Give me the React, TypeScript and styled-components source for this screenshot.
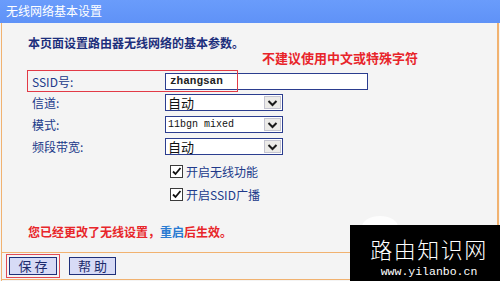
import React from 'react'
import styled, { createGlobalStyle } from 'styled-components'

const GlobalStyle = createGlobalStyle`
  html, body {
    margin: 0;
    padding: 0;
    background: #f4f4f4;
  }
  body {
    font-family: "Noto Sans CJK SC", "Liberation Sans", sans-serif;
  }
`

const Page = styled.div`
  position: relative;
  width: 500px;
  height: 281px;
  overflow: hidden;
  background: #f4f4f4;
`

const TitleBar = styled.div`
  height: 23px;
  line-height: 22px;
  padding-left: 6px;
  background: linear-gradient(#6a9cfb, #5f92f7);
  color: #ffffff;
  font-size: 12px;
`

const Panel = styled.div`
  display: flex;
  flex-direction: column;
  height: 258px;
  margin: 0 1px 0 1px;
  border-left: 1px solid #f1b270;
  border-right: 2px solid #f1b270;
  box-sizing: border-box;
`

const Content = styled.div`
  padding: 12px 0 0 26px;
`

const Intro = styled.div`
  height: 15px;
  line-height: 16px;
  font-size: 12px;
  font-weight: 700;
  color: #1d2f7c;
`

const Hint = styled.div`
  margin-left: 234px;
  height: 18px;
  line-height: 16px;
  font-size: 13px;
  font-weight: 700;
  color: #e8242a;
`

const FieldRow = styled.div<{ $height?: number }>`
  position: relative;
  display: flex;
  align-items: ${({ $height }) => ($height === 22 ? 'flex-start' : 'center')};
  height: ${({ $height }) => $height ?? 22}px;
  padding-left: 4px;
`

const SsidRow = styled(FieldRow)`
  align-items: center;
  margin-top: 2px;
  margin-bottom: 2px;
`

const Label = styled.div`
  width: 133px;
  flex: none;
  font-size: 12px;
  color: #20398a;
  line-height: 17px;
`

const Annotation = styled.div`
  position: absolute;
  left: -1px;
  top: 0;
  width: 209px;
  height: 20px;
  border: 1px solid #e23a46;
  pointer-events: none;
`

const TextInput = styled.div`
  width: 203px;
  height: 17px;
  box-sizing: border-box;
  border: 1px solid #2b3d8f;
  background: #ffffff;
  padding-left: 4px;
  font-family: "Liberation Mono", monospace;
  font-size: 11px;
  font-weight: 700;
  line-height: 15px;
  color: #222;
`

const Select = styled.div`
  display: flex;
  width: 118px;
  height: 17px;
  box-sizing: border-box;
  border: 1px solid #2b3d8f;
  background: #ffffff;
`

const SelectValue = styled.div<{ $mono?: boolean }>`
  flex: 1;
  padding-left: 2px;
  font-family: ${({ $mono }) =>
    $mono ? '"Liberation Mono", monospace' : '"Noto Sans CJK SC", sans-serif'};
  font-size: ${({ $mono }) => ($mono ? 10 : 13)}px;
  line-height: 15px;
  color: #111;
`

const SelectArrow = styled.div`
  display: flex;
  align-items: center;
  justify-content: center;
  width: 17px;
  margin: 1px;
  background: #ecebe8;
  border: 1px solid #c4c4d0;
  box-sizing: border-box;
`

const CheckRow = styled(FieldRow)`
  padding-left: 142px;
  height: 23px;
`

const CheckBox = styled.span`
  display: inline-flex;
  align-items: center;
  justify-content: center;
  width: 11px;
  height: 11px;
  margin-right: 3px;
  border: 1px solid #3a3a3a;
  background: #ffffff;
`

const CheckLabel = styled.span`
  font-size: 12px;
  color: #20398a;
`

const Message = styled.div`
  margin-top: 18px;
  line-height: 16px;
  font-size: 12px;
  font-weight: 700;
  color: #e8262a;
`

const Link = styled.span`
  color: #2a7bd2;
`

const Footer = styled.div`
  display: flex;
  align-items: center;
  gap: 9px;
  margin-top: auto;
  margin-bottom: 1px;
  height: 28px;
  box-sizing: border-box;
  margin-left: -1px;
  margin-right: -2px;
  padding-left: 5px;
  border-top: 1px solid #f1b270;
  border-bottom: 1px solid #f1b270;
`

const Focus = styled.div`
  padding: 2px;
  border: 1px solid #e04a56;
`

const Button = styled.div<{ $width: number }>`
  width: ${({ $width }) => $width}px;
  height: 18px;
  box-sizing: border-box;
  border: 1px solid #1e2f7a;
  background: #d7dbf6;
  color: #1c2a6c;
  font-size: 13px;
  line-height: 16px;
  text-align: center;
`

const Watermark = styled.div`
  position: absolute;
  right: 0;
  bottom: 0;
  width: 150px;
  height: 56px;
  background: #000000;
  color: #ffffff;
  display: flex;
  flex-direction: column;
  align-items: center;
`

const WatermarkGhost = styled.div`
  position: absolute;
  left: 362px;
  top: 216px;
  width: 36px;
  height: 22px;
  border-radius: 50%;
  background: rgba(255, 255, 255, 0.8);
`

const WatermarkTitle = styled.div`
  margin-top: 10px;
  margin-left: 8px;
  font-size: 22px;
  line-height: 26px;
  font-weight: 300;
  letter-spacing: 1.5px;
`

const WatermarkUrl = styled.div`
  margin-top: 4px;
  margin-left: 8px;
  font-family: "Liberation Mono", monospace;
  font-size: 11.5px;
  line-height: 13px;
`

const Chevron = () => (
  <svg width="11" height="8" viewBox="0 0 11 8">
    <path d="M1.5 2 L5.5 6 L9.5 2" stroke="#1a1a1a" strokeWidth="2" fill="none" />
  </svg>
)

const Tick = () => (
  <svg width="11" height="11" viewBox="0 0 11 11">
    <path d="M2 5.5 L4.5 8 L9.5 2" stroke="#111" strokeWidth="1.8" fill="none" />
  </svg>
)

function SelectField({ label, value, mono }: { label: string; value: string; mono?: boolean }) {
  return (
    <FieldRow $height={22}>
      <Label>{label}</Label>
      <Select>
        <SelectValue $mono={mono}>{value}</SelectValue>
        <SelectArrow>
          <Chevron />
        </SelectArrow>
      </Select>
    </FieldRow>
  )
}

function CheckField({ label }: { label: string }) {
  return (
    <CheckRow>
      <CheckBox>
        <Tick />
      </CheckBox>
      <CheckLabel>{label}</CheckLabel>
    </CheckRow>
  )
}

export default function App() {
  return (
    <Page>
      <GlobalStyle />
      <TitleBar>无线网络基本设置</TitleBar>
      <Panel>
        <Content>
          <Intro>本页面设置路由器无线网络的基本参数。</Intro>
          <Hint>不建议使用中文或特殊字符</Hint>
          <SsidRow>
            <Annotation />
            <Label>SSID号:</Label>
            <TextInput>zhangsan</TextInput>
          </SsidRow>
          <SelectField label="信道:" value="自动" />
          <SelectField label="模式:" value="11bgn mixed" mono />
          <SelectField label="频段带宽:" value="自动" />
          <CheckField label="开启无线功能" />
          <CheckField label="开启SSID广播" />
          <Message>
            您已经更改了无线设置，<Link>重启</Link>后生效。
          </Message>
        </Content>
        <Footer>
          <Focus>
            <Button $width={48}>保 存</Button>
          </Focus>
          <Button $width={47}>帮 助</Button>
        </Footer>
      </Panel>
      <WatermarkGhost />
      <Watermark>
        <WatermarkTitle>路由知识网</WatermarkTitle>
        <WatermarkUrl>www.yilanbo.cn</WatermarkUrl>
      </Watermark>
    </Page>
  )
}
